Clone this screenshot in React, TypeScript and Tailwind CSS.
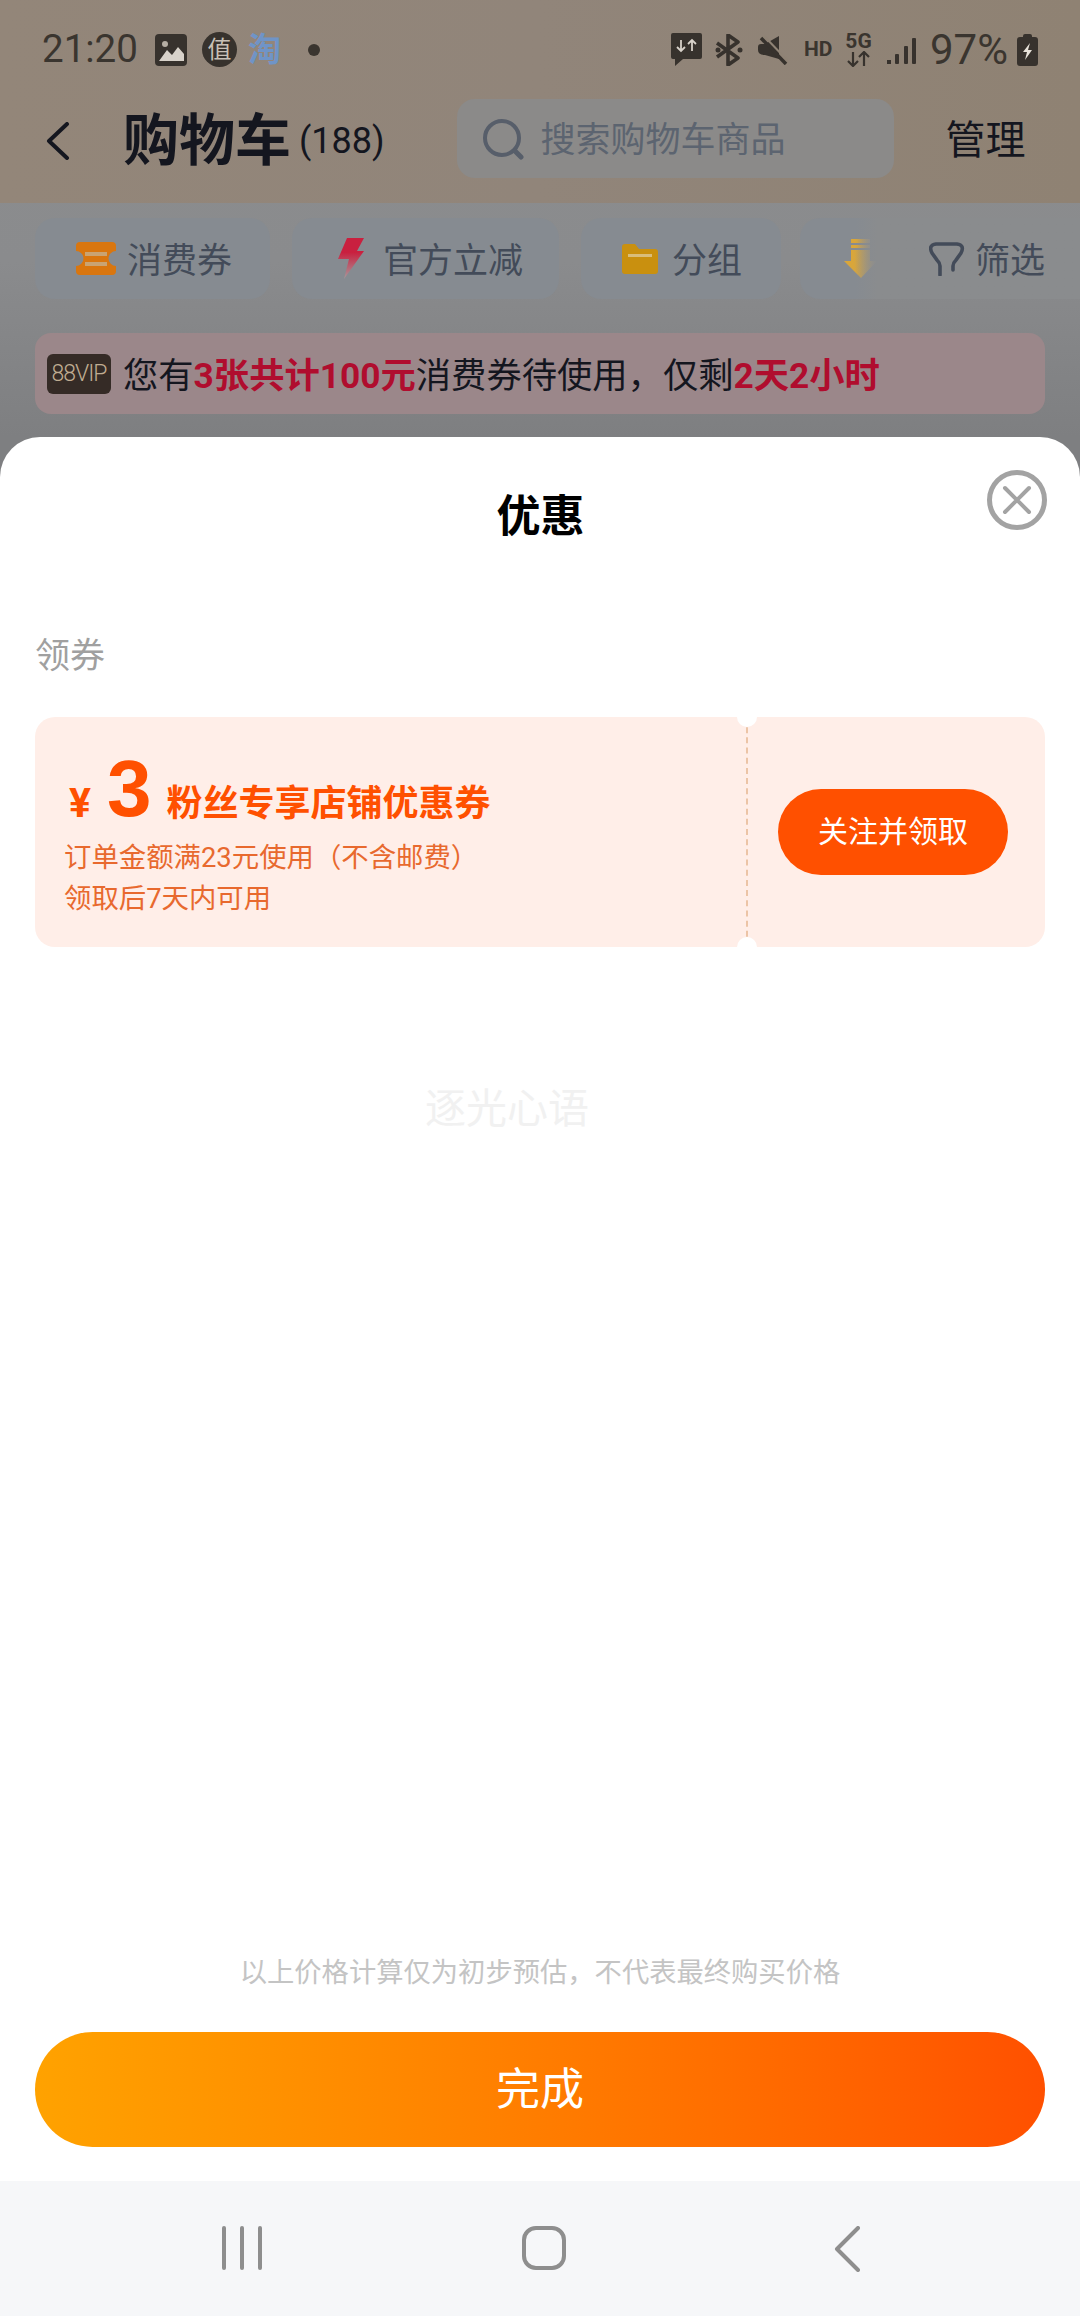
const chipClass =
  "h-[81px] rounded-[20px] bg-[#868b91] flex items-center shrink-0 text-[35px] text-[#434b59]";

function StatusLeft() {
  return (
    <div className="flex items-center text-[#3a352f]">
      <span className="text-[38.5px] leading-none">21:20</span>
      <svg className="ml-[17px]" width="32" height="32" viewBox="0 0 32 32">
        <rect width="32" height="32" rx="4" fill="#37322d" />
        <circle cx="10" cy="10" r="3" fill="#b5ada3" />
        <path d="M4 27 L12 16 L17 21 L23 13 L29 20 V27 Z" fill="#d8d2ca" />
      </svg>
      <span className="ml-[15px] w-[35px] h-[35px] rounded-full bg-[#37322d] flex items-center justify-center text-[#c8c0b6] text-[24px] leading-none">
        值
      </span>
      <span className="ml-[11px] text-[33px] font-bold leading-none text-[#6f94c7]">淘</span>
      <span className="ml-[27px] w-[12px] h-[12px] rounded-full bg-[#3a352f]" />
    </div>
  );
}

function StatusRight() {
  return (
    <div className="flex items-center text-[#3a352f]">
      <svg width="31" height="34" viewBox="0 0 31 34">
        <path d="M2 0 H29 a2 2 0 0 1 2 2 V24 a2 2 0 0 1 -2 2 H12 L4 33 V26 H2 a2 2 0 0 1 -2 -2 V2 a2 2 0 0 1 2 -2 Z" fill="#37322d" />
        <path d="M10 7 V18 M6 14 L10 18 L14 14 M21 18 V7 M17 11 L21 7 L25 11" stroke="#d8d2ca" strokeWidth="1.8" fill="none" />
      </svg>
      <svg className="ml-[13px]" width="28" height="32" viewBox="0 0 28 32">
        <path d="M2 9 L23 24 L13 31 V1 L23 8 L2 23" stroke="#37322d" strokeWidth="3.6" fill="none" strokeLinejoin="round" />
        <circle cx="3" cy="16" r="2.5" fill="#37322d" />
        <circle cx="25" cy="16" r="2.5" fill="#37322d" />
      </svg>
      <svg className="ml-[15px]" width="30" height="30" viewBox="0 0 30 30">
        <path d="M0 12 Q0 9 3 9 H7 L21 1 V24 L7 20 Q0 20 0 15 Z" fill="#37322d" />
        <path d="M3 3 L28 29" stroke="#37322d" strokeWidth="3.5" />
        <path d="M6 1 L30 26" stroke="#8f8375" strokeWidth="2" />
      </svg>
      <span className="ml-[16px] text-[21px] font-bold leading-none w-[27px]">HD</span>
      <div className="ml-[14px] w-[27px] flex flex-col items-center leading-none">
        <span className="text-[21px] font-bold leading-[19px]">5G</span>
        <svg width="25" height="16" viewBox="0 0 25 16">
          <path d="M7 1 V15 M2 10 L7 15 L12 10 M18 15 V1 M13 6 L18 1 L23 6" stroke="#37322d" strokeWidth="2.2" fill="none" />
        </svg>
      </div>
      <svg className="ml-[15px]" width="30" height="30" viewBox="0 0 30 30">
        <rect x="0" y="25" width="4" height="4" fill="#37322d" />
        <rect x="8" y="19" width="4" height="10" rx="1" fill="#37322d" />
        <rect x="17" y="11" width="4" height="18" rx="1" fill="#37322d" />
        <rect x="25" y="3" width="4" height="26" rx="1" fill="#37322d" />
      </svg>
      <span className="ml-[13px] text-[42px] leading-none">97%</span>
      <svg className="ml-[9px]" width="21" height="32" viewBox="0 0 21 32">
        <path d="M6 3 V2 a2 2 0 0 1 2 -2 H13 a2 2 0 0 1 2 2 V3 H18 a3 3 0 0 1 3 3 V29 a3 3 0 0 1 -3 3 H3 a3 3 0 0 1 -3 -3 V6 a3 3 0 0 1 3 -3 Z" fill="#37322d" />
        <path d="M13 9 L6 18 H10 L8 26 L15 16 H11 Z" fill="#e8e3da" />
      </svg>
    </div>
  );
}

function Backdrop() {
  return (
    <div className="h-[437px] shrink-0 flex flex-col bg-gradient-to-b from-[#8c8e8f] via-[#8a8b8d] via-[60%] to-[#7e7f81]">
      <div className="h-[203px] bg-gradient-to-r from-[#938679] via-[#91857a] to-[#8f8273] flex flex-col">
        <div className="h-[99px] pl-[42px] pr-[42px] flex items-center justify-between">
          <StatusLeft />
          <StatusRight />
        </div>
        <div className="h-[79px] flex items-center text-[#14161f]">
          <svg className="ml-[46px] mt-[4px]" width="24" height="38" viewBox="0 0 24 38">
            <path d="M21 2 L3 19 L21 36" stroke="#14161f" strokeWidth="4" fill="none" strokeLinecap="round" strokeLinejoin="round" />
          </svg>
          <span className="ml-[53px] pt-[5px] text-[56px] font-bold leading-none">购物车</span>
          <span className="ml-[8px] pt-[5px] text-[36px] leading-none">(188)</span>
          <div className="ml-[72px] w-[437px] h-[79px] rounded-[18px] bg-[#8b8a89] flex items-center">
            <svg className="ml-[25px]" width="42" height="42" viewBox="0 0 42 42">
              <circle cx="20" cy="20" r="17" stroke="#575e6a" strokeWidth="4" fill="none" />
              <path d="M33 33 L39 39" stroke="#575e6a" strokeWidth="5" strokeLinecap="round" />
            </svg>
            <span className="ml-[17px] pt-[3px] text-[35px] leading-none text-[#5c6470]">搜索购物车商品</span>
          </div>
          <span className="ml-[52px] pt-[5px] text-[40px] leading-none">管理</span>
        </div>
      </div>

      <div className="mt-[15px] flex items-center pl-[35px] relative">
        <div className={`${chipClass} w-[235px]`}>
          <svg className="ml-[40px]" width="42" height="33" viewBox="0 0 42 33">
            <path d="M5 0 H37 a4 4 0 0 1 4 4 V9 a7 7 0 0 0 0 15 V29 a4 4 0 0 1 -4 4 H5 a4 4 0 0 1 -4 -4 V24 a7 7 0 0 0 0 -15 V4 a4 4 0 0 1 4 -4 Z" fill="#d9760f" />
            <rect x="10" y="10" width="22" height="4" fill="#c9a372" />
            <rect x="10" y="20" width="22" height="4" fill="#c9a372" />
          </svg>
          <span className="ml-[10px] pt-[6px] leading-none">消费券</span>
        </div>
        <div className={`${chipClass} ml-[22px] w-[267px]`}>
          <svg className="ml-[46px]" width="27" height="41" viewBox="0 0 27 41">
            <defs>
              <linearGradient id="bolt" x1="0" y1="0" x2="0" y2="1">
                <stop offset="0.35" stopColor="#c9203f" />
                <stop offset="1" stopColor="#a8999c" />
              </linearGradient>
            </defs>
            <path d="M9 0 H26 L19 13 H26 L6 41 L11 21 H0 Z" fill="url(#bolt)" />
          </svg>
          <span className="ml-[18px] pt-[6px] leading-none">官方立减</span>
        </div>
        <div className={`${chipClass} ml-[22px] w-[200px]`}>
          <svg className="ml-[41px]" width="36" height="30" viewBox="0 0 36 30">
            <path d="M3 0 H13 L17 5 H33 a3 3 0 0 1 3 3 V27 a3 3 0 0 1 -3 3 H3 a3 3 0 0 1 -3 -3 V3 a3 3 0 0 1 3 -3 Z" fill="#c9900f" />
            <rect x="6" y="10" width="24" height="3" fill="#d9bd7a" />
          </svg>
          <span className="ml-[14px] pt-[6px] leading-none">分组</span>
        </div>
        <div className={`${chipClass} ml-[19px] w-[110px]`}>
          <svg className="ml-[44px]" width="33" height="39" viewBox="0 0 33 39">
            <defs>
              <linearGradient id="down" x1="0" y1="0" x2="1" y2="0">
                <stop offset="0.3" stopColor="#d9a63a" />
                <stop offset="1" stopColor="#9b968c" />
              </linearGradient>
            </defs>
            <rect x="7" y="0" width="19" height="4" fill="url(#down)" />
            <rect x="7" y="6" width="19" height="3" fill="url(#down)" />
            <path d="M7 11 H26 V22 H33 L17 39 L0 22 H7 Z" fill="url(#down)" />
          </svg>
        </div>
        <div className="absolute right-0 top-0 h-[81px] w-[225px] flex items-center bg-gradient-to-r from-transparent to-[#8a8c8e] to-[10%] text-[#434b59]">
          <svg className="ml-[74px]" width="36" height="34" viewBox="0 0 36 34">
            <path d="M11 33 V24 Q11 21 8 18 L3 11 Q-1 3 7 2 H28 Q36 3 32 11 L27 18 Q24 21 24 24 V28" stroke="#434b59" strokeWidth="3.6" fill="none" strokeLinecap="round" />
          </svg>
          <span className="ml-[10px] pt-[6px] text-[35px] leading-none">筛选</span>
        </div>
      </div>

      <div className="mt-[34px] mx-[35px] h-[81px] rounded-[16px] bg-[#9b878a] flex items-center">
        <span className="ml-[12px] w-[64px] h-[40px] rounded-[6px] bg-[#352b26] flex items-center justify-center text-[23px] font-light tracking-[-1px] leading-none text-[#c0ad92]">
          88VIP
        </span>
        <span className="ml-[12px] pt-[7px] text-[35.3px] leading-none text-[#14161f] whitespace-nowrap">
          您有<b className="text-[#b00d2e]">3张共计100元</b>消费券待使用，仅剩<b className="text-[#b00d2e]">2天2小时</b>
        </span>
      </div>
    </div>
  );
}

function Coupon() {
  return (
    <div className="mx-[35px] h-[230px] rounded-[20px] bg-[#ffeee8] flex relative overflow-hidden">
      <div className="w-[713px] pl-[29px] pt-[38px] text-[#ff5000] border-r-2 border-dashed border-[#ecc4a6] shrink-0">
        <div className="flex items-end h-[68px] pl-[5px]">
          <span className="text-[41px] font-bold leading-[36px] mb-[2px]">¥</span>
          <span className="ml-[16px] text-[80px] font-bold leading-[68px] font-['Liberation_Sans']">3</span>
          <span className="ml-[15px] mb-[-3px] text-[36px] font-bold leading-[44px]">粉丝专享店铺优惠券</span>
        </div>
        <p className="mt-[15px] text-[27.4px] leading-[41px] text-[#e8692e]">订单金额满23元使用（不含邮费）</p>
        <p className="text-[27.4px] leading-[41px] text-[#e8692e]">领取后7天内可用</p>
      </div>
      <div className="flex-1 flex items-center pl-[30px]">
        <button className="w-[230px] h-[86px] rounded-full bg-[#ff5000] text-white text-[30px] leading-none">
          关注并领取
        </button>
      </div>
      <span className="absolute left-[702px] -top-[10px] w-[20px] h-[20px] rounded-full bg-white" />
      <span className="absolute left-[702px] -bottom-[10px] w-[20px] h-[20px] rounded-full bg-white" />
    </div>
  );
}

export default function App() {
  return (
    <div className="w-[1080px] h-[2316px] overflow-hidden flex flex-col bg-[#7e7f81] font-['Roboto','Noto_Sans_CJK_SC',sans-serif]">
      <Backdrop />

      <div className="flex-1 rounded-t-[40px] bg-white flex flex-col relative">
        <div className="h-[124px] flex items-end justify-center">
          <h1 className="text-[44px] font-bold leading-none text-black mb-[22px] ml-[1px]">优惠</h1>
        </div>
        <button className="absolute right-[33px] top-[33px] w-[60px] h-[60px] rounded-full border-[5px] border-[#a3a3a3] flex items-center justify-center">
          <svg width="30" height="30" viewBox="0 0 30 30">
            <path d="M3 3 L27 27 M27 3 L3 27" stroke="#a3a3a3" strokeWidth="4" strokeLinecap="round" />
          </svg>
        </button>
        <p className="mt-[78px] ml-[35px] text-[35px] leading-none text-[#a0a0a0]">领券</p>
        <div className="mt-[43px]">
          <Coupon />
        </div>
        <span className="absolute left-[425px] top-[652px] text-[41px] leading-none text-[#f1f1f1]">逐光心语</span>

        <p className="mt-auto text-center text-[27.3px] leading-none text-[#c4c4c4]">
          以上价格计算仅为初步预估，不代表最终购买价格
        </p>
        <button className="mt-[45px] mb-[34px] mx-[35px] h-[115px] rounded-full bg-gradient-to-r from-[#ffa200] to-[#ff5000] text-white text-[44px] leading-none">
          完成
        </button>
      </div>

      <div className="h-[135px] shrink-0 bg-[#f6f7f9] flex items-start pt-[45px]">
        <div className="ml-[222px] flex gap-[14px]">
          <span className="w-[4px] h-[44px] rounded-full bg-[#8e8e8e]" />
          <span className="w-[4px] h-[44px] rounded-full bg-[#8e8e8e]" />
          <span className="w-[4px] h-[44px] rounded-full bg-[#8e8e8e]" />
        </div>
        <span className="ml-[260px] w-[44px] h-[44px] rounded-[14px] border-[4px] border-[#8e8e8e]" />
        <svg className="ml-[268px]" width="26" height="46" viewBox="0 0 26 46">
          <path d="M24 2 L3 23 L24 44" stroke="#8e8e8e" strokeWidth="4" fill="none" strokeLinecap="round" strokeLinejoin="round" />
        </svg>
      </div>
    </div>
  );
}
